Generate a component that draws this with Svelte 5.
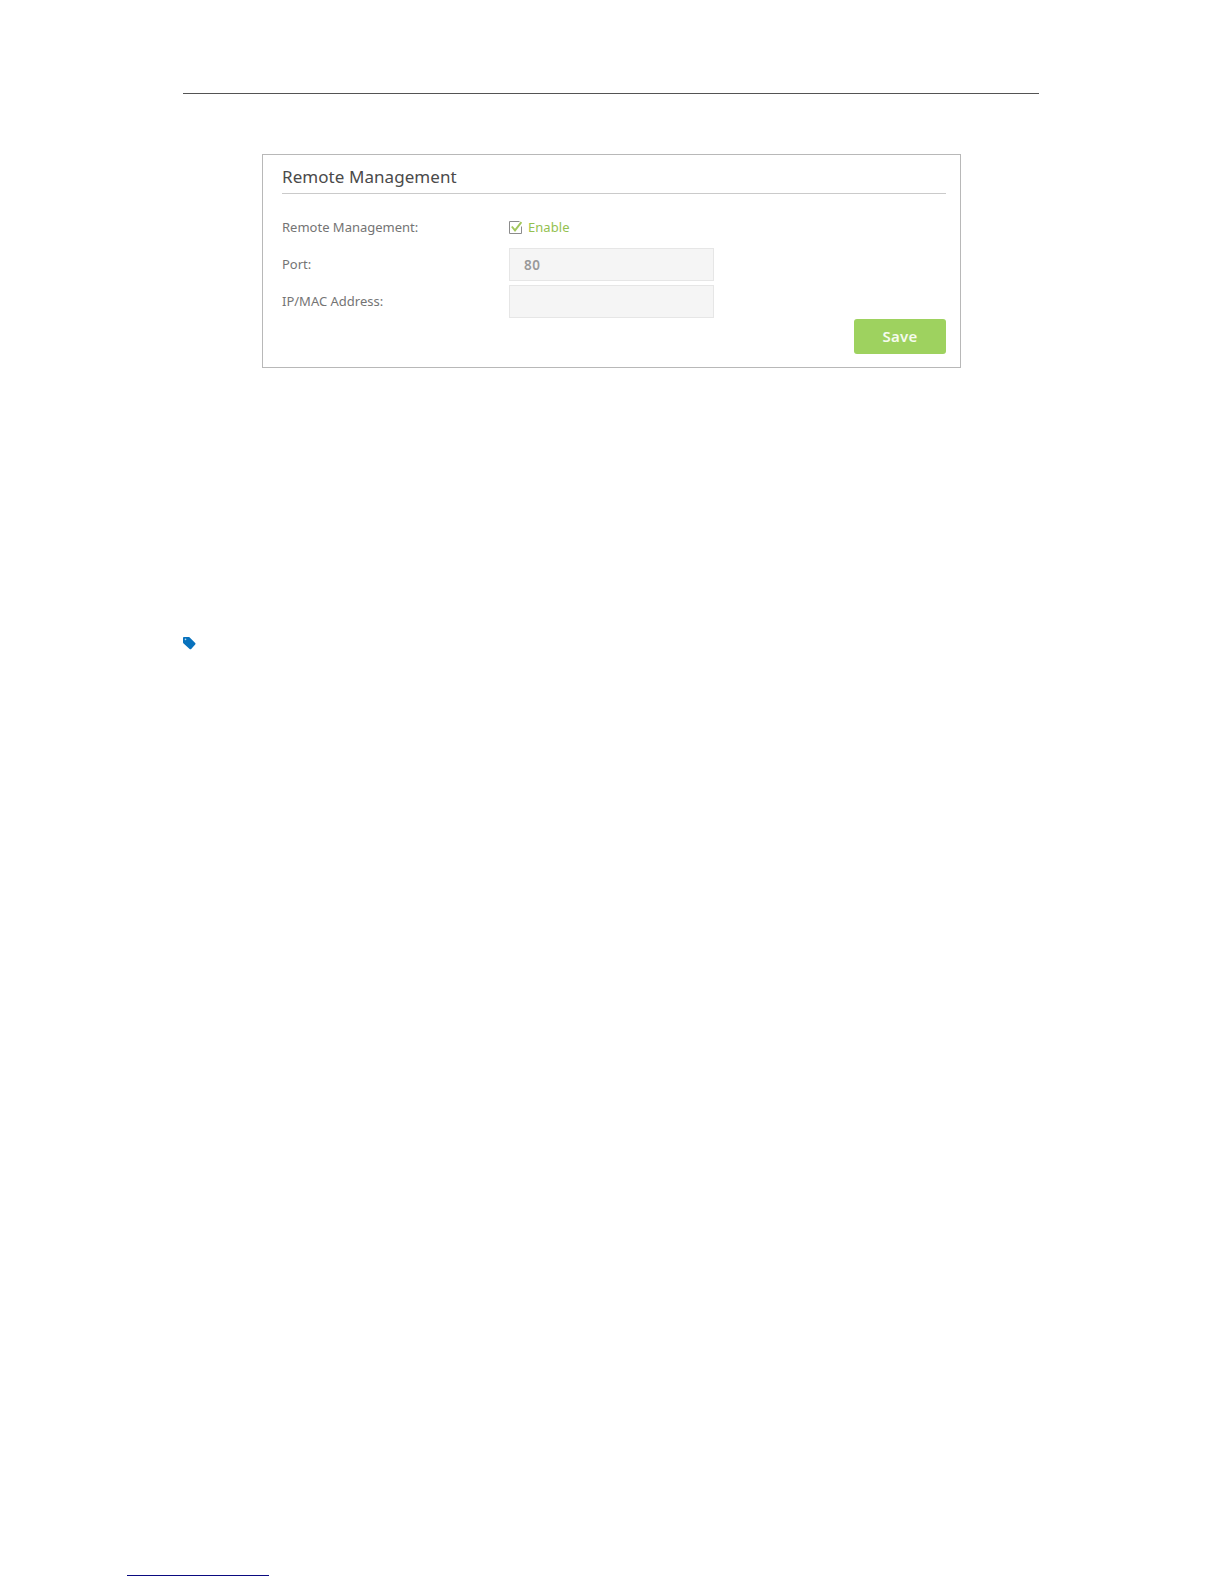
<script>
  let remoteEnabled = $state(true);
  let port = $state('80');
  let address = $state('');
</script>

<main class="page">
  <hr class="header-rule" />

  <section class="panel">
    <h1>Remote Management</h1>
    <div class="fields">
      <div class="row">
        <span class="label">Remote Management:</span>
        <button class="toggle" onclick={() => (remoteEnabled = !remoteEnabled)}>
          <svg width="14" height="14" viewBox="0 0 14 14">
            <path d="M10.5 .5H.5v12h12V5.5" fill="none" stroke="#8c8c8c" />
            {#if remoteEnabled}
              <path d="M2.8 5.5 6 9.4 12.4 1.2" fill="none" stroke="#a2c75c" stroke-width="1.9" />
            {/if}
          </svg>
          <span class="enable">Enable</span>
        </button>
      </div>
      <label class="row">
        <span class="label">Port:</span>
        <input bind:value={port} />
      </label>
      <label class="row">
        <span class="label">IP/MAC Address:</span>
        <input bind:value={address} />
      </label>
    </div>
    <button class="save">Save</button>
  </section>

  <svg class="tag" width="14" height="14" viewBox="0 0 14 14">
    <path d="M.9 0H6.2L12.2 5.9Q13 6.7 12.2 7.5L8.2 12Q7.4 12.7 6.6 12L.6 6.5Q0 6 0 5.3V.9Q0 0 .9 0Z" fill="#0872bd" />
    <circle cx="2.5" cy="2.4" r=".8" fill="#b5d8ef" />
  </svg>

  <hr class="footer-rule" />
</main>

<style>
  :global(body) {
    background: #fff;
  }
  .page {
    box-sizing: border-box;
    width: 1224px;
    height: 1584px;
    padding: 93px 185px 8px 183px;
    display: flex;
    flex-direction: column;
    align-items: flex-start;
    overflow: hidden;
    font-family: 'Noto Sans', Verdana, sans-serif;
  }
  hr {
    margin: 0;
    border: 0;
    height: 1px;
  }
  .header-rule {
    width: 856px;
    background: #545454;
  }
  .panel {
    box-sizing: border-box;
    width: 699px;
    height: 214px;
    margin: 60px 0 0 79px;
    padding: 0 14px 0 19px;
    border: 1px solid #b8b8b8;
    display: flex;
    flex-direction: column;
  }
  h1 {
    box-sizing: border-box;
    height: 39px;
    margin: 0;
    padding-top: 11px;
    border-bottom: 1px solid #cacaca;
    color: #4a4a4a;
    font-size: 17px;
    font-weight: 400;
    line-height: 22px;
    letter-spacing: 0.06px;
  }
  .fields {
    display: flex;
    flex-direction: column;
    gap: 4px;
    padding-top: 17px;
  }
  .row {
    display: flex;
    align-items: center;
    height: 33px;
  }
  .label {
    width: 227px;
    padding-bottom: 2px;
    color: #747474;
    font-size: 13px;
    line-height: 18px;
    white-space: nowrap;
  }
  button {
    padding: 0;
    border: 0;
    font-family: inherit;
  }
  .toggle {
    display: flex;
    align-items: center;
    gap: 5px;
    background: none;
  }
  .enable {
    padding-bottom: 2px;
    color: #94c150;
    font-size: 13px;
    line-height: 18px;
    letter-spacing: 0.05px;
  }
  input {
    box-sizing: border-box;
    width: 205px;
    height: 33px;
    padding: 0 14px;
    border: 1px solid #e6e6e6;
    border-radius: 0;
    background: #f5f5f5;
    color: #999;
    font: 600 13.5px 'Noto Sans', Verdana, sans-serif;
    letter-spacing: 0.5px;
    outline: none;
  }
  .save {
    align-self: flex-end;
    width: 92px;
    height: 35px;
    margin-top: 1px;
    padding-bottom: 1px;
    border-radius: 3px;
    background: #9ed25f;
    color: #f5fbed;
    font-size: 15px;
    font-weight: 600;
    letter-spacing: 0.3px;
  }
  .tag {
    margin-top: 269px;
  }
  .footer-rule {
    width: 142px;
    margin: auto 0 0 -56px;
    background: #0a0a80;
  }
</style>
